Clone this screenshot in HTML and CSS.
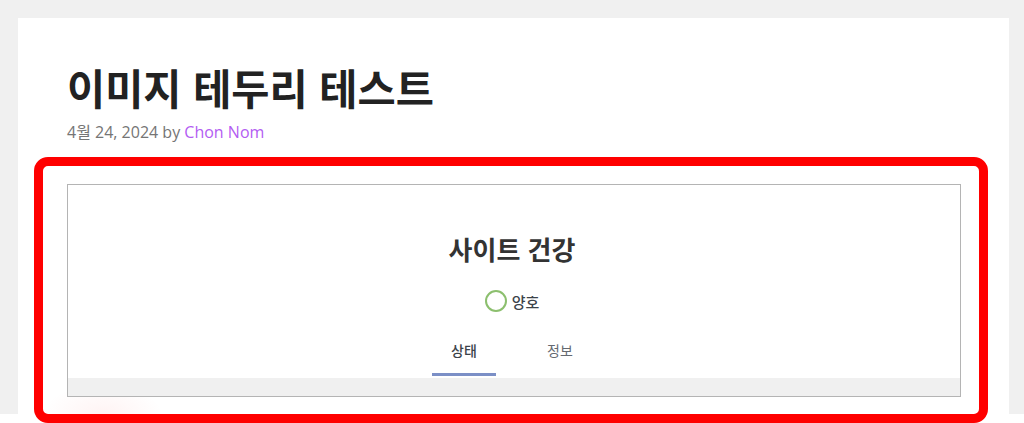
FILE: index.html
```html
<!DOCTYPE html>
<html lang="ko">
<head>
<meta charset="utf-8">
<title>이미지 테두리 테스트</title>
<link rel="stylesheet" href="styles.css">
</head>
<body>
<div class="page">
  <article class="card">
    <h1 class="entry-title">이미지 테두리 테스트</h1>
    <div class="entry-meta">4월 24, 2024 by <a class="author" href="#">Chon Nom</a></div>
    <div class="highlight">
      <div class="shot">
        <div class="shot-header">
          <h2 class="shot-title">사이트 건강</h2>
          <div class="status">
            <span class="status-ring"></span>
            <span class="status-label">양호</span>
          </div>
          <nav class="tabs">
            <span class="tab active">상태</span>
            <span class="tab">정보</span>
          </nav>
        </div>
        <div class="shot-body"></div>
      </div>
    </div>
  </article>
</div>
</body>
</html>
```

FILE: styles.css
```css
html, body {
  margin: 0;
  padding: 0;
  background: #ffffff;
}

.page {
  height: 423px;
  padding: 18px 15px 0 18px;
  box-sizing: border-box;
  background: linear-gradient(to bottom, #f0f0f0 0, #f0f0f0 414px, #ffffff 414px, #ffffff 100%);
}

.card {
  background: #ffffff;
  height: 396px;
  padding: 45px 0 0 0;
  box-sizing: border-box;
}

.entry-title {
  margin: 0 0 0 49px;
  font-family: "Noto Sans CJK KR", "Noto Sans", sans-serif;
  font-weight: 700;
  font-size: 41.5px;
  line-height: 49px;
  color: #222222;
}

.entry-meta {
  margin: 9px 0 0 49px;
  font-family: "Open Sans", "Noto Sans CJK KR", sans-serif;
  font-size: 16px;
  line-height: 22px;
  color: #757575;
}

.author {
  color: #b35cf2;
  text-decoration: none;
}

.highlight {
  margin: 14px 0 0 16px;
  width: 954px;
  height: 266px;
  box-sizing: border-box;
  border: 9px solid #ff0000;
  border-radius: 14px;
  padding: 18px 18px 16px 24px;
  background: radial-gradient(ellipse 60px 30px at 60px 100%, rgba(255, 60, 60, 0.06), rgba(255, 60, 60, 0) 100%), #ffffff;
}

.shot {
  height: 213px;
  box-sizing: border-box;
  border: 1px solid #b4b4b4;
  display: flex;
  flex-direction: column;
  font-family: "Noto Sans CJK KR", "Noto Sans", sans-serif;
}

.shot-header {
  background: #ffffff;
  flex: 1;
  display: flex;
  flex-direction: column;
  align-items: center;
  padding: 44px 4px 0 0;
}

.shot-title {
  margin: 0;
  font-size: 26px;
  font-weight: 700;
  line-height: 40px;
  color: #333333;
}

.status {
  margin-top: 20px;
  display: flex;
  align-items: center;
  gap: 5px;
  height: 24px;
}

.status-ring {
  width: 18px;
  height: 18px;
  border: 2px solid #8cbf6e;
  border-radius: 50%;
}

.status-label {
  font-size: 15px;
  font-weight: 500;
  color: #3c434a;
}

.tabs {
  margin-top: 27px;
  display: flex;
  gap: 32px;
}

.tab {
  width: 64px;
  text-align: center;
  font-size: 14px;
  line-height: 20px;
  padding-bottom: 13px;
  border-bottom: 3px solid transparent;
  color: #646970;
}

.tab.active {
  color: #3c434a;
  font-weight: 500;
  border-bottom-color: #7b8fc6;
}

.shot-body {
  height: 18px;
  background: #f0f0f0;
}
```
